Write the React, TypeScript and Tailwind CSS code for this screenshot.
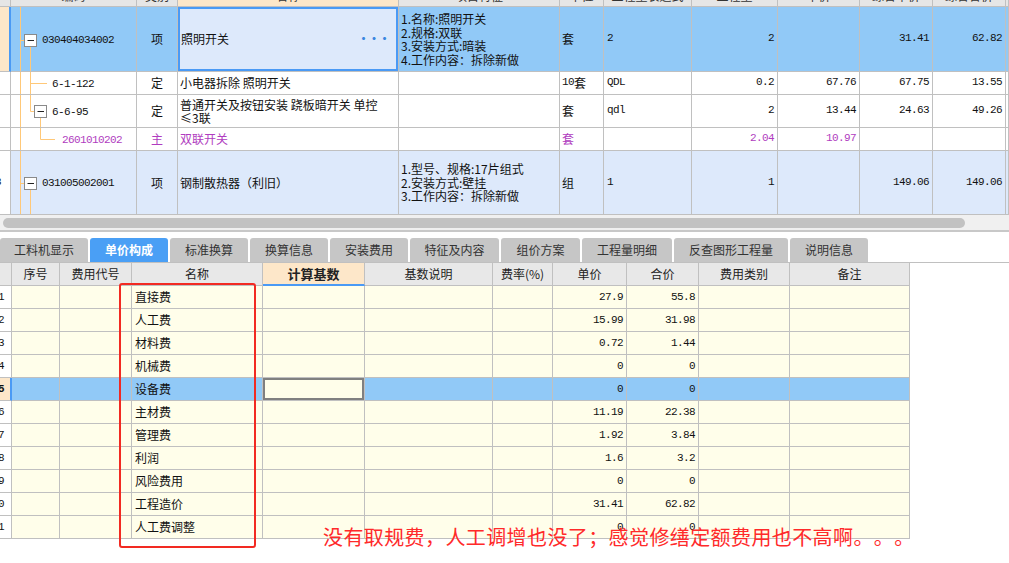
import React from "react";

const CJK = "font-['Noto_Sans_CJK_SC',sans-serif]";
const MONO = "font-['Liberation_Mono','Noto_Sans_CJK_SC',monospace] text-[11px] tracking-[-0.6px]";

function N({ children }: { children: React.ReactNode }) {
  return <span className={MONO}>{children}</span>;
}

const topCols =
  "grid grid-cols-[11px_126px_41px_221px_161px_44px_88px_86px_82px_73px_73px_1fr]";
const cell = "border-r border-b border-[#c0c0c0] overflow-hidden flex items-center text-[12px] leading-[13.5px]";

const OR = "#ffc878";

function Box({ x, y }: { x: number; y: number }) {
  return (
    <g>
      <rect x={x} y={y} width={12} height={12} fill="#fff" stroke="#8a8a8a" strokeWidth={1} />
      <line x1={x + 3} y1={y + 6} x2={x + 9.5} y2={y + 6} stroke="#222" strokeWidth={1} />
    </g>
  );
}

function TopHeader() {
  const hs = ["", "编码", "类别", "名称", "项目特征", "单位", "工程量表达式", "工程量", "单价", "综合单价", "综合合价", ""];
  return (
    <div className={`${topCols} h-[7px]`}>
      {hs.map((h, i) => (
        <div
          key={i}
          className={`border-r border-b border-[#c0c0c0] overflow-hidden text-[12px] leading-[14px] text-center text-[#333] ${
            i === 3 ? "bg-[#fde7c9]" : "bg-[#e6e6e6]"
          }`}
        >
          <div className="-mt-[11px]">{h}</div>
        </div>
      ))}
    </div>
  );
}

export default function App() {
  return (
    <div className={`relative w-[1009px] h-[563px] overflow-hidden bg-white text-[#111] ${CJK}`}>
      {/* TOP TABLE */}
      <TopHeader />

      {/* Row 7 */}
      <div className={`${topCols} h-[65px] bg-[#91c9f7]`}>
        <div className="border-b border-[#c0c0c0] bg-[#fde7c9] flex items-center justify-end pr-[9px] text-[12px] font-bold border-r-2 border-r-[#4a9af5]">
          <N>7</N>
        </div>
        <div className={`${cell} relative pl-[31px]`}>
          <svg className="absolute inset-0" width="126" height="64">
            <line x1="9.5" y1="0" x2="9.5" y2="64" stroke={OR} />
            <line x1="9.5" y1="33.5" x2="13.5" y2="33.5" stroke={OR} />
            <line x1="19.5" y1="39" x2="19.5" y2="64" stroke={OR} />
            <Box x={13.5} y={27.5} />
          </svg>
          <span className="relative"><N>030404034002</N></span>
        </div>
        <div className={`${cell} justify-center`}>项</div>
        <div className="border-r border-b border-[#c0c0c0] overflow-hidden">
          <div className="h-full border-2 border-[#4a9af5] bg-[#dde9fb] flex items-center justify-between pl-[1px] pr-[7px] text-[12px]">
            <span>照明开关</span>
            <span className="text-[#3a86e0] font-bold tracking-[-1.5px] text-[12px] leading-[12px]">···</span>
          </div>
        </div>
        <div className={`${cell} pl-[2px]`}>
          <div className="flex flex-col">
            <span>1.名称:照明开关</span>
            <span>2.规格:双联</span>
            <span>3.安装方式:暗装</span>
            <span>4.工作内容：拆除新做</span>
          </div>
        </div>
        <div className={`${cell} pl-[2px]`}>套</div>
        <div className={`${cell} pl-[3px]`}><N>2</N></div>
        <div className={`${cell} justify-end pr-[3px]`}><N>2</N></div>
        <div className={cell}></div>
        <div className={`${cell} justify-end pr-[3px]`}><N>31.41</N></div>
        <div className={`${cell} justify-end pr-[3px]`}><N>62.82</N></div>
        <div className={cell}></div>
      </div>

      {/* Row 6-1-122 */}
      <div className={`${topCols} h-[23px] bg-white`}>
        <div className={cell}></div>
        <div className={`${cell} relative pl-[41px]`}>
          <svg className="absolute inset-0" width="126" height="22">
            <line x1="9.5" y1="0" x2="9.5" y2="22" stroke={OR} />
            <line x1="19.5" y1="0" x2="19.5" y2="22" stroke={OR} />
            <line x1="19.5" y1="11.5" x2="36" y2="11.5" stroke={OR} />
          </svg>
          <span className="relative"><N>6-1-122</N></span>
        </div>
        <div className={`${cell} justify-center`}>定</div>
        <div className={`${cell} pl-[2px]`}>小电器拆除 照明开关</div>
        <div className={cell}></div>
        <div className={`${cell} pl-[2px]`}><N>10</N>套</div>
        <div className={`${cell} pl-[3px]`}><N>QDL</N></div>
        <div className={`${cell} justify-end pr-[3px]`}><N>0.2</N></div>
        <div className={`${cell} justify-end pr-[3px]`}><N>67.76</N></div>
        <div className={`${cell} justify-end pr-[3px]`}><N>67.75</N></div>
        <div className={`${cell} justify-end pr-[3px]`}><N>13.55</N></div>
        <div className={cell}></div>
      </div>

      {/* Row 6-6-95 */}
      <div className={`${topCols} h-[33px] bg-white`}>
        <div className={cell}></div>
        <div className={`${cell} relative pl-[41px]`}>
          <svg className="absolute inset-0" width="126" height="32">
            <line x1="9.5" y1="0" x2="9.5" y2="32" stroke={OR} />
            <line x1="19.5" y1="0" x2="19.5" y2="16.5" stroke={OR} />
            <line x1="19.5" y1="16.5" x2="23.5" y2="16.5" stroke={OR} />
            <line x1="29.5" y1="22" x2="29.5" y2="32" stroke={OR} />
            <Box x={23.5} y={10.5} />
          </svg>
          <span className="relative"><N>6-6-95</N></span>
        </div>
        <div className={`${cell} justify-center`}>定</div>
        <div className={`${cell} pl-[2px]`}>
          <div className="flex flex-col">
            <span>普通开关及按钮安装 跷板暗开关 单控</span>
            <span>≤3联</span>
          </div>
        </div>
        <div className={cell}></div>
        <div className={`${cell} pl-[2px]`}>套</div>
        <div className={`${cell} pl-[3px]`}><N>qdl</N></div>
        <div className={`${cell} justify-end pr-[3px]`}><N>2</N></div>
        <div className={`${cell} justify-end pr-[3px]`}><N>13.44</N></div>
        <div className={`${cell} justify-end pr-[3px]`}><N>24.63</N></div>
        <div className={`${cell} justify-end pr-[3px]`}><N>49.26</N></div>
        <div className={cell}></div>
      </div>

      {/* Row 主 */}
      <div className={`${topCols} h-[23px] bg-white text-[#b03cc0]`}>
        <div className={cell}></div>
        <div className={`${cell} relative pl-[51px]`}>
          <svg className="absolute inset-0" width="126" height="22">
            <line x1="9.5" y1="0" x2="9.5" y2="22" stroke={OR} />
            <line x1="29.5" y1="0" x2="29.5" y2="11.5" stroke={OR} />
            <line x1="29.5" y1="11.5" x2="44" y2="11.5" stroke={OR} />
          </svg>
          <span className="relative"><N>2601010202</N></span>
        </div>
        <div className={`${cell} justify-center`}>主</div>
        <div className={`${cell} pl-[2px]`}>双联开关</div>
        <div className={cell}></div>
        <div className={`${cell} pl-[2px]`}>套</div>
        <div className={cell}></div>
        <div className={`${cell} justify-end pr-[3px]`}><N>2.04</N></div>
        <div className={`${cell} justify-end pr-[3px]`}><N>10.97</N></div>
        <div className={cell}></div>
        <div className={cell}></div>
        <div className={cell}></div>
      </div>

      {/* Row 8 */}
      <div className={`${topCols} h-[64px] bg-[#dde9fb]`}>
        <div className={`${cell} bg-white justify-end pr-[9px]`}><N>8</N></div>
        <div className={`${cell} relative pl-[31px]`}>
          <svg className="absolute inset-0" width="126" height="64">
            <line x1="9.5" y1="0" x2="9.5" y2="64" stroke={OR} />
            <line x1="9.5" y1="32.5" x2="13.5" y2="32.5" stroke={OR} />
            <line x1="19.5" y1="38" x2="19.5" y2="64" stroke={OR} />
            <Box x={13.5} y={26.5} />
          </svg>
          <span className="relative"><N>031005002001</N></span>
        </div>
        <div className={`${cell} justify-center`}>项</div>
        <div className={`${cell} pl-[2px]`}>钢制散热器（利旧）</div>
        <div className={`${cell} pl-[2px]`}>
          <div className="flex flex-col">
            <span>1.型号、规格:17片组式</span>
            <span>2.安装方式:壁挂</span>
            <span>3.工作内容：拆除新做</span>
          </div>
        </div>
        <div className={`${cell} pl-[2px]`}>组</div>
        <div className={`${cell} pl-[3px]`}><N>1</N></div>
        <div className={`${cell} justify-end pr-[3px]`}><N>1</N></div>
        <div className={cell}></div>
        <div className={`${cell} justify-end pr-[3px]`}><N>149.06</N></div>
        <div className={`${cell} justify-end pr-[3px]`}><N>149.06</N></div>
        <div className={cell}></div>
      </div>

      {/* Scrollbar */}
      <div className="h-[15px] bg-[#f0f0f0] flex items-center pl-[3px]">
        <div className="w-[962px] h-[10px] rounded-[5px] bg-[#c2c2c2]" />
      </div>
      <div className="h-[2px] bg-[#c8c8c8]" />
      <div className="h-[6px] bg-white" />

      {/* Tabs */}
      <div className="flex gap-[2px] h-[25px] border-b border-[#c0c0c0] text-[12px]">
        {[
          ["工料机显示", "w-[88px]"],
          ["单价构成", "w-[78px]"],
          ["标准换算", "w-[78px]"],
          ["换算信息", "w-[78px]"],
          ["安装费用", "w-[78px]"],
          ["特征及内容", "w-[89px]"],
          ["组价方案", "w-[79px]"],
          ["工程量明细", "w-[90px]"],
          ["反查图形工程量", "w-[114px]"],
          ["说明信息", "w-[78px]"],
        ].map(([t, w], i) => (
          <div
            key={t}
            className={`${w} h-[24px] rounded-t-[3px] flex items-center justify-center ${
              i === 1 ? "bg-[#4a9ff5] text-white font-bold" : "bg-[#c6c6c6] text-[#333]"
            }`}
          >
            {t}
          </div>
        ))}
      </div>

      {/* Bottom table */}
      <BottomTable />

      {/* Red annotation box */}
      <div className="absolute left-[119px] top-[283px] w-[137px] h-[265px] border-2 border-[#f22a22] rounded-[3px]" />
      {/* Red annotation text */}
      <div className="absolute left-[323px] top-[527px] text-[20px] leading-[20px] tracking-[0.4px] text-[#ff2a2a] whitespace-nowrap [text-spacing-trim:space-all] [font-feature-settings:'chws'_0,'halt'_0]">
        没有取规费，人工调增也没了；感觉修缮定额费用也不高啊。。。
      </div>
    </div>
  );
}

const botCols = "grid grid-cols-[12px_48px_72px_131px_102px_128px_60px_74px_72px_91px_120px]";
const bcell = "border-r border-b border-[#c0c0c0] overflow-hidden flex items-center text-[12px]";

function BottomTable() {
  const rows: [string, string, string][] = [
    ["直接费", "27.9", "55.8"],
    ["人工费", "15.99", "31.98"],
    ["材料费", "0.72", "1.44"],
    ["机械费", "0", "0"],
    ["设备费", "0", "0"],
    ["主材费", "11.19", "22.38"],
    ["管理费", "1.92", "3.84"],
    ["利润", "1.6", "3.2"],
    ["风险费用", "0", "0"],
    ["工程造价", "31.41", "62.82"],
    ["人工费调整", "0", "0"],
  ];
  const heads = ["", "序号", "费用代号", "名称", "计算基数", "基数说明", "费率(%)", "单价", "合价", "费用类别", "备注"];
  return (
    <div className="w-[910px]">
      <div className={`${botCols} h-[23px]`}>
        {heads.map((h, i) => (
          <div
            key={i}
            className={`${bcell} justify-center text-[#222] ${
              i === 4
                ? "bg-[#fde7c9] font-bold text-[13px] border-b-2 border-b-[#4a9af5]"
                : "bg-[#e8e8e8]"
            }`}
          >
            {h}
          </div>
        ))}
      </div>
      {rows.map(([name, p, t], idx) => {
        const sel = idx === 4;
        const bg = sel ? "bg-[#91c9f7]" : "bg-[#fffeea]";
        return (
          <div key={idx} className={`${botCols} h-[23px]`}>
            <div
              className={`${bcell} justify-end ${
                sel ? "bg-[#fde7c9] font-bold border-r-2 border-r-[#4a9af5] pr-[6px]" : "bg-white pr-[7px]"
              }`}
            >
              <N>{idx + 1}</N>
            </div>
            <div className={`${bcell} ${bg}`}></div>
            <div className={`${bcell} ${bg}`}></div>
            <div className={`${bcell} ${bg} pl-[3px]`}>{name}</div>
            {sel ? (
              <div className="border-r border-b border-[#c0c0c0] bg-[#91c9f7]">
                <div className="h-full border-2 border-[#808080] bg-[#fffeea]" />
              </div>
            ) : (
              <div className={`${bcell} ${bg}`}></div>
            )}
            <div className={`${bcell} ${bg}`}></div>
            <div className={`${bcell} ${bg}`}></div>
            <div className={`${bcell} ${bg} justify-end pr-[3px]`}><N>{p}</N></div>
            <div className={`${bcell} ${bg} justify-end pr-[3px]`}><N>{t}</N></div>
            <div className={`${bcell} ${bg}`}></div>
            <div className={`${bcell} ${bg}`}></div>
          </div>
        );
      })}
    </div>
  );
}
